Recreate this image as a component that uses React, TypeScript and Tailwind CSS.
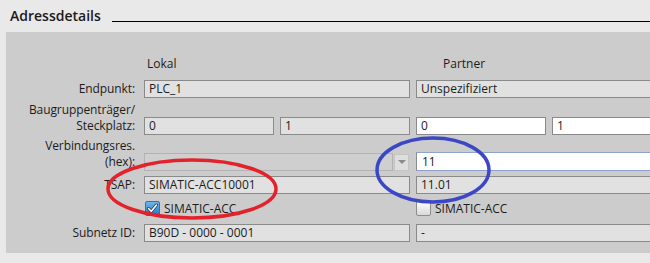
import React from 'react';

const font = { fontFamily: '"Open Sans", "Noto Sans", sans-serif' };

function Field({ value = '', white = false, className = '' }: { value?: string; white?: boolean; className?: string }) {
  return (
    <div
      className={`h-[18px] border border-[#8a8a8a] flex items-center pl-[4px] text-[12px] leading-none text-[#1c1c1c] whitespace-nowrap overflow-hidden ${
        white ? 'bg-white' : 'bg-[#e1e1e1]'
      } ${className}`}
    >
      {value}
    </div>
  );
}

function Check({ checked }: { checked: boolean }) {
  return checked ? (
    <div className="w-[15px] h-[15px] shrink-0 rounded-[2px] border border-[#3a6fa5] bg-gradient-to-b from-[#6fb6ea] to-[#1f78c6] flex items-center justify-center">
      <svg width="11" height="11" viewBox="0 0 11 11">
        <path d="M1.5 5.5 L4.3 8.3 L9.5 2" fill="none" stroke="#1a3550" strokeWidth="3" strokeLinecap="round" />
        <path d="M1.5 5.5 L4.3 8.3 L9.5 2" fill="none" stroke="#ffffff" strokeWidth="1.6" strokeLinecap="round" />
      </svg>
    </div>
  ) : (
    <div className="w-[15px] h-[15px] shrink-0 rounded-[2px] border border-[#8d8d8d] bg-gradient-to-b from-[#ffffff] to-[#d8d8d8]" />
  );
}

function Label({ children }: { children: React.ReactNode }) {
  return (
    <div className="w-[130px] shrink-0 pr-[1px] text-right text-[12px] leading-[16px] tracking-[-0.1px] text-[#1c1c1c] whitespace-nowrap">
      {children}
    </div>
  );
}

export default function App() {
  return (
    <div className="w-[650px] h-[263px] bg-[#e9e9e9] overflow-hidden relative" style={font}>
      {/* header */}
      <div className="h-[32px] flex items-start pt-[6px]">
        <div className="pl-[10px] text-[14px] font-semibold leading-[20px] text-[#1a1a1a]">Adressdetails</div>
        <div className="flex-1 ml-[11px] mt-[15px] border-t border-black" />
      </div>

      {/* panel */}
      <div className="ml-[6px] bg-[#cccccc] pt-[24px] pb-[11px]">
        <div className="flex text-[12px] leading-[16px] text-[#1c1c1c]">
          <div className="w-[141px] shrink-0" />
          <div className="w-[296px] shrink-0">Lokal</div>
          <div>Partner</div>
        </div>

        <div className="mt-[8px] flex flex-col">
          {/* Endpunkt */}
          <div className="flex items-center gap-[8px]">
            <Label>Endpunkt:</Label>
            <Field value="PLC_1" className="w-[266px] shrink-0" />
            <Field value="Unspezifiziert" className="w-[266px] shrink-0 -ml-[2px]" />
          </div>

          {/* Baugruppenträger */}
          <div className="mt-[4px] flex items-end gap-[8px]">
            <Label>
              Baugruppenträger/
              <br />
              Steckplatz:
            </Label>
            <div className="flex gap-[6px] w-[266px] shrink-0 mb-[-1px]">
              <Field value="0" className="w-[130px]" />
              <Field value="1" className="w-[130px]" />
            </div>
            <div className="flex gap-[6px] w-[266px] shrink-0 -ml-[2px] mb-[-1px]">
              <Field value="0" white className="w-[130px]" />
              <Field value="1" white className="w-[130px]" />
            </div>
          </div>

          {/* Verbindungsres */}
          <div className="mt-[4px] flex items-end gap-[8px]">
            <Label>
              Verbindungsres.
              <br />
              (hex):
            </Label>
            <div className="flex w-[266px] shrink-0 mb-[-1px] items-center">
              <div className="h-[18px] w-[249px] border border-[#b3b3b3] bg-[#cfcfcf]" />
              <div className="ml-[1px] h-[17px] w-[15px] bg-[#dedede] border border-[#c4c4c4] flex items-center justify-center">
                <div className="w-0 h-0 border-l-[4px] border-r-[4px] border-t-[4px] border-l-transparent border-r-transparent border-t-[#8a8a8a]" />
              </div>
            </div>
            <div className="h-[19px] w-[266px] shrink-0 -ml-[2px] mb-[-1px] bg-white border border-[#8a8a8a] border-y-[#8ea2cf] flex items-center pl-[5px] text-[12px] leading-none text-[#1c1c1c]">
              11
            </div>
          </div>

          {/* TSAP */}
          <div className="mt-[6px] flex items-center gap-[8px]">
            <Label>TSAP:</Label>
            <Field value="SIMATIC-ACC10001" className="w-[266px] shrink-0" />
            <Field value="11.01" className="w-[266px] shrink-0 -ml-[2px]" />
          </div>

          {/* checkbox */}
          <div className="mt-[7px] flex items-center gap-[8px] h-[15px]">
            <div className="w-[130px] shrink-0" />
            <div className="w-[266px] shrink-0 flex items-center gap-[4px] pl-[1px]">
              <Check checked />
              <span className="text-[12px] leading-none text-[#1c1c1c]">SIMATIC-ACC</span>
            </div>
            <div className="w-[266px] shrink-0 -ml-[2px] flex items-center gap-[4px]">
              <Check checked={false} />
              <span className="text-[12px] leading-none text-[#1c1c1c]">SIMATIC-ACC</span>
            </div>
          </div>

          {/* Subnetz */}
          <div className="mt-[8px] flex items-center gap-[8px]">
            <Label>Subnetz ID:</Label>
            <Field value="B90D - 0000 - 0001" className="w-[266px] shrink-0" />
            <Field value="-" className="w-[266px] shrink-0 -ml-[2px]" />
          </div>
        </div>
      </div>

      {/* annotations */}
      <svg className="absolute inset-0 pointer-events-none" width="650" height="263">
        <ellipse cx="192" cy="189" rx="84" ry="29" fill="none" stroke="#e3232b" strokeWidth="3.5" />
        <ellipse cx="433" cy="170" rx="56" ry="32" fill="none" stroke="#3c47c6" strokeWidth="3.5" />
      </svg>
    </div>
  );
}
